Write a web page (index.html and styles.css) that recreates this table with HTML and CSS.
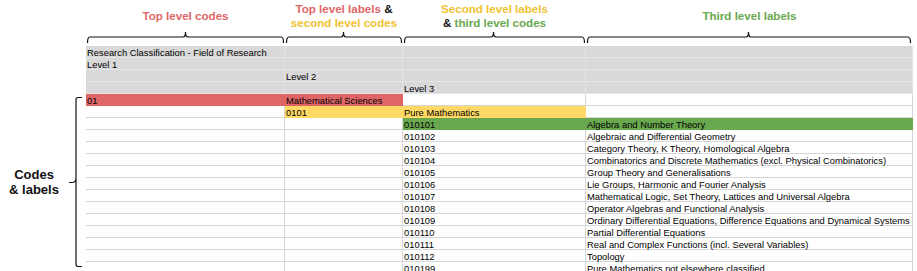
FILE: index.html
```html
<!DOCTYPE html>
<html>
<head>
<meta charset="utf-8">
<link rel="stylesheet" href="styles.css">
</head>
<body>
<div class="page">
  <div class="captions">
    <div class="spacer"></div>
    <div class="cap"><span class="red">Top level codes</span></div>
    <div class="cap"><span><span class="red">Top level labels</span> &amp;</span><span class="yellow">second level codes</span></div>
    <div class="cap"><span class="yellow">Second level labels</span><span>&amp; <span class="green">third level codes</span></span></div>
    <div class="cap"><span class="green">Third level labels</span></div>
  </div>
  <div class="braces">
    <div class="spacer"></div>
    <svg class="brace" width="199" height="16" viewBox="0 0 199 16"><path d="M1.5 13 Q1.5 7 4 7 H97 Q99.5 7 99.5 2 Q99.5 7 102 7 H195 Q197.5 7 197.5 13"/></svg>
    <svg class="brace" width="118" height="16" viewBox="0 0 118 16"><path d="M1.5 13 Q1.5 7 4 7 H56 Q58.5 7 58.5 2 Q58.5 7 61 7 H114 Q116.5 7 116.5 13"/></svg>
    <svg class="brace" width="183" height="16" viewBox="0 0 183 16"><path d="M1.5 13 Q1.5 7 4 7 H88 Q90.5 7 90.5 2 Q90.5 7 93 7 H179 Q181.5 7 181.5 13"/></svg>
    <svg class="brace" width="327" height="16" viewBox="0 0 327 16"><path d="M1.5 13 Q1.5 7 4 7 H160 Q162.5 7 162.5 2 Q162.5 7 165 7 H322 Q324.5 7 324.5 13"/></svg>
  </div>
  <div class="body">
    <div class="side">
      <div class="side-label">Codes<br>&amp; labels</div>
      <svg class="vbrace" width="16" height="172" viewBox="0 0 16 172"><path d="M14 1.5 H10 Q8 1.5 8 4 V82 Q8 86.5 4 86.5 H1 M8 82 Q8 86.5 8 91 V168 Q8 170.5 10 170.5 H14"/></svg>
    </div>
    <div class="sheet">
      <div class="row gray"><div class="c">Research Classification - Field of Research</div><div class="c"></div><div class="c"></div><div class="c"></div></div>
      <div class="row gray"><div class="c">Level 1</div><div class="c"></div><div class="c"></div><div class="c"></div></div>
      <div class="row gray"><div class="c"></div><div class="c">Level 2</div><div class="c"></div><div class="c"></div></div>
      <div class="row gray"><div class="c"></div><div class="c"></div><div class="c">Level 3</div><div class="c"></div></div>
      <div class="row"><div class="c bg-red">01</div><div class="c bg-red">Mathematical Sciences</div><div class="c"></div><div class="c"></div></div>
      <div class="row"><div class="c"></div><div class="c bg-yellow">0101</div><div class="c bg-yellow">Pure Mathematics</div><div class="c"></div></div>
      <div class="row"><div class="c"></div><div class="c"></div><div class="c bg-green">010101</div><div class="c bg-green">Algebra and Number Theory</div></div>
      <div class="row"><div class="c"></div><div class="c"></div><div class="c">010102</div><div class="c">Algebraic and Differential Geometry</div></div>
      <div class="row"><div class="c"></div><div class="c"></div><div class="c">010103</div><div class="c">Category Theory, K Theory, Homological Algebra</div></div>
      <div class="row"><div class="c"></div><div class="c"></div><div class="c">010104</div><div class="c">Combinatorics and Discrete Mathematics (excl. Physical Combinatorics)</div></div>
      <div class="row"><div class="c"></div><div class="c"></div><div class="c">010105</div><div class="c">Group Theory and Generalisations</div></div>
      <div class="row"><div class="c"></div><div class="c"></div><div class="c">010106</div><div class="c">Lie Groups, Harmonic and Fourier Analysis</div></div>
      <div class="row"><div class="c"></div><div class="c"></div><div class="c">010107</div><div class="c">Mathematical Logic, Set Theory, Lattices and Universal Algebra</div></div>
      <div class="row"><div class="c"></div><div class="c"></div><div class="c">010108</div><div class="c">Operator Algebras and Functional Analysis</div></div>
      <div class="row"><div class="c"></div><div class="c"></div><div class="c">010109</div><div class="c">Ordinary Differential Equations, Difference Equations and Dynamical Systems</div></div>
      <div class="row"><div class="c"></div><div class="c"></div><div class="c">010110</div><div class="c">Partial Differential Equations</div></div>
      <div class="row"><div class="c"></div><div class="c"></div><div class="c">010111</div><div class="c">Real and Complex Functions (incl. Several Variables)</div></div>
      <div class="row"><div class="c"></div><div class="c"></div><div class="c">010112</div><div class="c">Topology</div></div>
      <div class="row"><div class="c"></div><div class="c"></div><div class="c">010199</div><div class="c">Pure Mathematics not elsewhere classified</div></div>
    </div>
  </div>
</div>
</body>
</html>
```

FILE: styles.css
```css
html, body {
  margin: 0;
  padding: 0;
  background: #ffffff;
}
body {
  font-family: "Liberation Sans", Arial, sans-serif;
  color: #111;
  overflow: hidden;
  height: 271px;
}
.page {
  width: 917px;
}
.captions {
  display: grid;
  grid-template-columns: 86px 199px 118px 183px 327px;
  height: 30px;
}
.cap {
  display: flex;
  flex-direction: column;
  align-items: center;
  justify-content: center;
  font-weight: bold;
  font-size: 11.6px;
  line-height: 14px;
  padding-top: 2px;
  color: #111;
}
.red { color: #e06666; }
.yellow { color: #f1c232; }
.green { color: #6aa84f; }
.braces {
  display: grid;
  grid-template-columns: 86px 199px 118px 183px 327px;
  height: 16px;
}
.brace, .vbrace {
  display: block;
}
.brace path, .vbrace path {
  fill: none;
  stroke: #111;
  stroke-width: 1.2;
}
.body {
  display: flex;
}
.side {
  width: 86px;
  display: flex;
  align-items: center;
  padding-top: 50px;
  box-sizing: border-box;
  align-self: flex-start;
}
.side-label {
  width: 68px;
  text-align: center;
  font-weight: bold;
  font-size: 13px;
  line-height: 15px;
  color: #111;
}
.sheet {
  display: flex;
  flex-direction: column;
}
.row {
  display: grid;
  grid-template-columns: 199px 118px 183px 327px;
  height: 12px;
}
.c {
  box-sizing: border-box;
  height: 12px;
  border-right: 1px solid #d6d6d6;
  border-bottom: 1px solid #d6d6d6;
  font-size: 9.4px;
  line-height: 12px;
  padding-top: 1px;
  padding-left: 1px;
  white-space: nowrap;
  color: #000;
}
.gray .c {
  background: #d9d9d9;
  border-color: #e4e4e4;
}
.bg-red {
  background: #e06666;
  border-color: #e06666;
}
.bg-yellow {
  background: #ffd966;
  border-color: #ffd966;
}
.bg-green {
  background: #6aa84f;
  border-color: #6aa84f;
}
```
